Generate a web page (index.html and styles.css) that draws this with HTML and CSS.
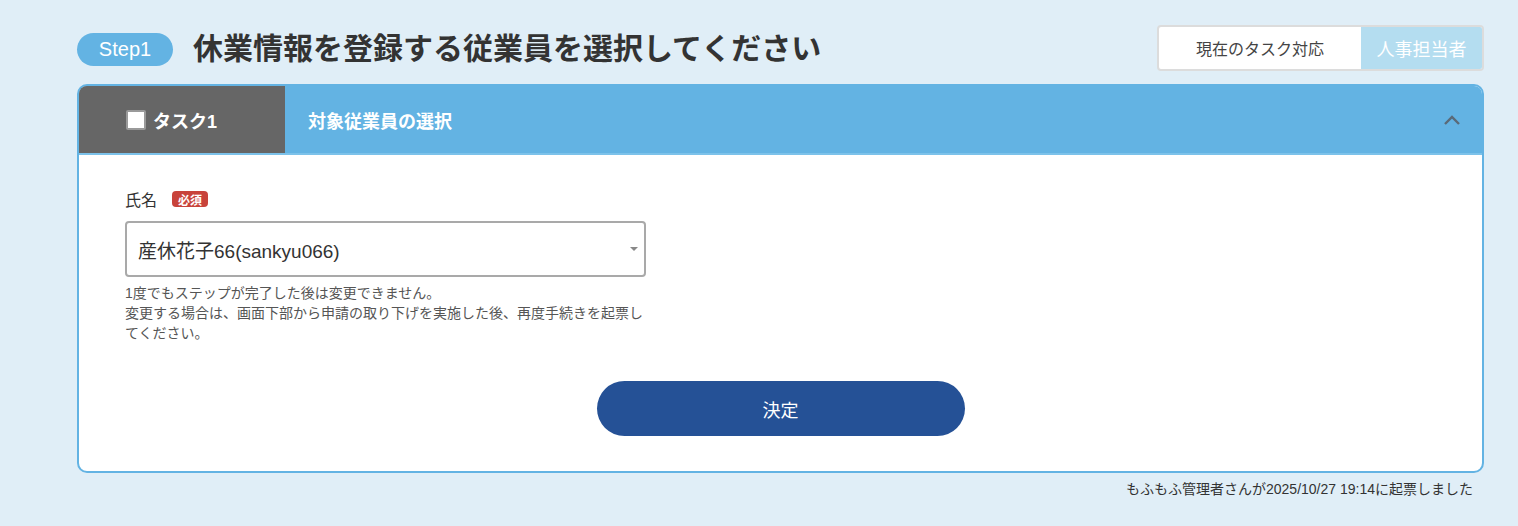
FILE: index.html
```html
<!DOCTYPE html>
<html lang="ja">
<head>
<meta charset="utf-8">
<title>休業情報の登録</title>
<link rel="stylesheet" href="styles.css">
</head>
<body>
<div class="page">
  <div class="page-head">
    <div class="page-title">
      <span class="step-pill">Step1</span>
      <h1 class="title">休業情報を登録する従業員を選択してください</h1>
    </div>
    <div class="assignee">
      <span class="assignee-label">現在のタスク対応</span>
      <span class="assignee-role">人事担当者</span>
    </div>
  </div>

  <section class="task-card">
    <header class="task-head">
      <div class="task-tab">
        <span class="task-check"></span>
        <span class="task-num">タスク1</span>
      </div>
      <div class="task-name">対象従業員の選択</div>
      <svg class="task-toggle" width="18" height="10" viewBox="0 0 18 10">
        <path d="M2 9 L9 2 L16 9" fill="none" stroke="#5a6a78" stroke-width="2.4"/>
      </svg>
    </header>
    <div class="task-body">
      <div class="field">
        <div class="field-label">
          <span>氏名</span>
          <span class="required">必須</span>
        </div>
        <div class="select">
          <span class="select-value">産休花子66(sankyu066)</span>
          <span class="select-caret"></span>
        </div>
        <p class="field-help">1度でもステップが完了した後は変更できません。<br>変更する場合は、画面下部から申請の取り下げを実施した後、再度手続きを起票してください。</p>
      </div>
      <div class="actions">
        <button class="btn-primary" type="button">決定</button>
      </div>
    </div>
  </section>
  <p class="meta">もふもふ管理者さんが2025/10/27 19:14に起票しました</p>
</div>
</body>
</html>
```

FILE: styles.css
```css
* { box-sizing: border-box; }

html, body {
  margin: 0;
  background: #e0eef7;
  font-family: "Liberation Sans", "Noto Sans CJK JP", sans-serif;
  color: #333;
}

.page {
  width: 1407px;
  margin-left: 77px;
  padding-top: 25px;
}

.page-head {
  display: flex;
  justify-content: space-between;
  align-items: center;
  height: 46px;
}

.page-title {
  display: flex;
  align-items: center;
  gap: 20px;
  padding-top: 2px;
}

.step-pill {
  display: inline-flex;
  align-items: center;
  justify-content: center;
  width: 96px;
  height: 33px;
  border-radius: 17px;
  background: #63b3e3;
  color: #fff;
  font-size: 20px;
}

.title {
  margin: 0;
  font-size: 30px;
  line-height: 36px;
  font-weight: 700;
  color: #333;
}

.assignee {
  display: flex;
  height: 46px;
  width: 327px;
  border: 2px solid #dcdcdc;
  border-radius: 4px;
  overflow: hidden;
  background: #fff;
}

.assignee-label {
  flex: 1;
  display: flex;
  align-items: center;
  justify-content: center;
  font-size: 16px;
  color: #444;
}

.assignee-role {
  width: 121px;
  display: flex;
  align-items: center;
  justify-content: center;
  background: #b4ddf0;
  color: #fff;
  font-size: 18px;
}

.task-card {
  margin-top: 13px;
  background: #fff;
  border: 2px solid #63b3e3;
  border-radius: 10px;
  overflow: hidden;
}

.task-head {
  display: flex;
  align-items: center;
  height: 69px;
  background: #63b3e3;
  border-bottom: 2px solid #7cc2ea;
}

.task-tab {
  display: flex;
  align-items: center;
  gap: 7px;
  width: 206px;
  height: 100%;
  padding-left: 47px;
  background: #666;
  color: #fff;
  font-size: 18px;
  font-weight: 700;
}

.task-check {
  width: 20px;
  height: 20px;
  background: #fff;
  border: 2px solid #9a9a9a;
  border-radius: 2px;
}

.task-name {
  flex: 1;
  padding-left: 23px;
  color: #fff;
  font-size: 18px;
  font-weight: 700;
}

.task-toggle {
  margin-right: 21px;
}

.task-body {
  padding: 34px 0 35px 46px;
}

.field {
  width: 521px;
}

.field-label {
  display: flex;
  align-items: center;
  gap: 15px;
  height: 20px;
  font-size: 16px;
  color: #333;
}

.required {
  display: inline-flex;
  align-items: center;
  justify-content: center;
  width: 36px;
  height: 16px;
  border-radius: 4px;
  background: #c8433b;
  color: #fff;
  font-size: 12px;
  font-weight: 700;
}

.select {
  margin-top: 12px;
  position: relative;
  display: flex;
  align-items: center;
  height: 56px;
  padding-left: 11px;
  border: 2px solid #a9a9a9;
  border-radius: 4px;
  background: #fff;
}

.select-value {
  font-size: 19px;
  color: #333;
}

.select-caret {
  position: absolute;
  right: 6px;
  top: 24px;
  width: 0;
  height: 0;
  border-left: 4px solid transparent;
  border-right: 4px solid transparent;
  border-top: 4px solid #888;
}

.field-help {
  width: 525px;
  margin: 6px 0 0;
  font-size: 14px;
  line-height: 20px;
  color: #555;
}

.actions {
  display: flex;
  justify-content: center;
  margin-top: 38px;
  padding-right: 46px;
}

.btn-primary {
  width: 368px;
  height: 55px;
  border: none;
  border-radius: 28px;
  background: #255196;
  color: #fff;
  font-family: inherit;
  font-size: 18px;
  cursor: pointer;
}

.meta {
  margin: 8px 11px 0 0;
  text-align: right;
  font-size: 14px;
  line-height: 17px;
  color: #333;
}
```
